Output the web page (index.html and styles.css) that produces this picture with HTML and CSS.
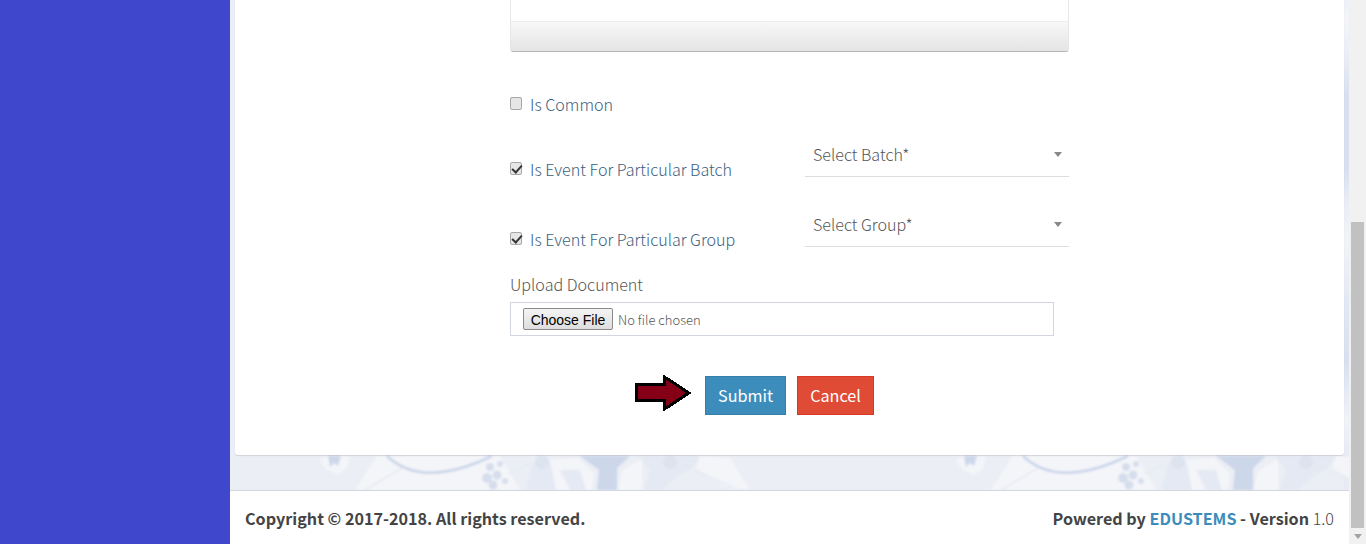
FILE: index.html
```html
<!DOCTYPE html>
<html lang="en">
<head>
<meta charset="utf-8">
<title>Event</title>
<link rel="stylesheet" href="styles.css">
</head>
<body>
<div class="app">
  <aside class="sidebar"></aside>
  <div class="main">
    <div class="content">
      <svg class="pattern" width="1119" height="35" viewBox="0 -1 1119 35" aria-hidden="true">
        <defs>
          <filter id="soft"><feGaussianBlur stdDeviation="1"/></filter>
          <g id="tile">
            <path class="pale" d="M90 4 L98 0 L120 0 L117 12 L108 19 L96 13 Z"/>
            <path class="dark" d="M98 0 L111 0 L108 10 L104 7 L100 11 Z"/>
            <path class="pale" d="M147 0 L125 34 L290 34 L270 0 Z"/>
            <path class="stemthin" d="M135 34 L172 12"/>
            <path class="stem" d="M157 0 C178 20 212 24 262 0"/>
            <circle class="grape" cx="260" cy="11" r="4"/><circle class="grape" cx="267" cy="19" r="4.5"/>
            <circle class="grape" cx="257" cy="22" r="5"/><circle class="grape" cx="270" cy="8" r="3"/>
            <circle class="grape" cx="263" cy="29" r="4.5"/><circle class="grape" cx="275" cy="25" r="3"/>
            <path class="stemthin" d="M278 18 L298 9"/>
            <path class="petal" d="M296 34 L302 8 L312 0 L322 8 L338 34 Z"/>
            <circle class="petal2" cx="312" cy="6" r="7"/>
            <path class="pale" d="M320 4 L348 2 L364 18 L362 34 L326 34 Z"/>
            <path class="petal" d="M330 14 L350 14 L356 34 L340 34 Z"/>
            <path class="dark" d="M350 0 L400 0 L387 12 L387 34 L367 34 L369 14 Z"/>
            <path class="pale" d="M392 15 L412 2 L412 34 L388 34 Z"/>
            <path class="petal" d="M408 0 L470 0 L462 12 L448 20 L432 34 L414 34 L420 14 Z"/>
            <circle class="petal2" cx="440" cy="6" r="7"/>
            <path class="pale" d="M470 0 L500 2 L520 34 L494 30 L466 12 Z"/>
            <path class="stemthin" d="M463 14 L503 31"/>
          </g>
        </defs>
        <g filter="url(#soft)">
          <use href="#tile"/>
          <use href="#tile" x="636"/>
        </g>
      </svg>
      <section class="card">
        <div class="form">
          <div class="editor">
            <div class="editor-body"></div>
            <div class="editor-foot"></div>
          </div>
          <label class="check common"><input type="checkbox"><span>Is Common</span></label>
          <div class="check-row first">
            <label class="check"><input type="checkbox" checked><span>Is Event For Particular Batch</span></label>
            <div class="select"><span>Select Batch*</span><i class="caret"></i></div>
          </div>
          <div class="check-row">
            <label class="check"><input type="checkbox" checked><span>Is Event For Particular Group</span></label>
            <div class="select"><span>Select Group*</span><i class="caret"></i></div>
          </div>
          <div class="upload-label">Upload Document</div>
          <div class="upload"><button class="file-btn" type="button">Choose File</button><span class="file-name">No file chosen</span></div>
          <div class="actions">
            <svg class="arrow" width="60" height="38" viewBox="0 0 60 38" aria-hidden="true">
              <path d="M1.5 10.5 H29.5 V3 L54 19 L29.5 35 V26.5 H1.5 Z" fill="#850017" stroke="#000" stroke-width="3"/>
            </svg>
            <button class="btn submit" type="button">Submit</button>
            <button class="btn cancel" type="button">Cancel</button>
          </div>
        </div>
      </section>
    </div>
    <footer class="footer">
      <strong>Copyright © 2017-2018. All rights reserved.</strong>
      <span><strong>Powered by <span class="brand">EDUSTEMS</span> - Version</strong> <span class="ver">1.0</span></span>
    </footer>
  </div>
  <div class="scrollbar">
    <div class="track"><div class="thumb"></div></div>
    <i class="down"></i>
  </div>
</div>
</body>
</html>
```
FILE: styles.css
```css
* { box-sizing: border-box; }
html, body { margin: 0; height: 544px; overflow: hidden; }
body { font-family: "Noto Sans CJK SC", "Source Sans Pro", "Open Sans", sans-serif; color: #444; background: #fff; }
.app { display: flex; height: 544px; }
.sidebar { width: 230px; flex: none; background: #3f48cc; }
.main { flex: 1; min-width: 0; display: flex; flex-direction: column; }
.content { position: relative; height: 491px; flex: none; border-bottom: 1px solid #d2d6de; padding-left: 5px; padding-right: 5px;
  background: linear-gradient(#edf0f7 0, #f3f5f9 20px, #e8edf5 60px, #d8e0ef 95px, #d8e0ef 170px, #e8edf5 200px, #f2f4f8 240px, #e3e9f3 300px, #d8e0ef 360px, #f0f3f8 420px, #e6ebf4 456px) right top / 5px 100% no-repeat, #ebeef4; }
.pattern { position: absolute; left: 0; bottom: 0; }
.pale { fill: #f4f5f9; }
.grape { fill: #d6deed; }
.petal { fill: #e4e9f3; }
.petal2 { fill: #dde4f0; }
.dark { fill: #cdd7ea; }
.stem { fill: none; stroke: #c9d4ea; stroke-width: 2.5; }
.stemthin { fill: none; stroke: #e6eaf3; stroke-width: 1.5; }
.card { position: relative; height: 455px; background: #fff; border-radius: 0 0 3px 3px; box-shadow: 0 1px 1px rgba(0,0,0,.12); }
.form { width: 559px; margin-left: 275px; }
.editor { height: 52px; border: 1px solid #e6e6e6; border-top: 0; border-bottom: 1px solid #b5b5b5; border-radius: 0 0 3px 3px; }
.editor-body { height: 22px; border-bottom: 1px solid #ededed; }
.editor-foot { height: 29px; background: linear-gradient(#f8f8f8, #e4e4e4); }
.check { display: flex; align-items: center; font-weight: 300; font-size: 16.1px; line-height: 22px; }
.check input { appearance: none; -webkit-appearance: none; position: relative; width: 12px; height: 13px; margin: 0 8px 1px 0; background: #e6e6e6; border: 1px solid #a8a8a8; border-radius: 2px; }
.check input:checked::after { content: ""; position: absolute; left: 3px; top: 0; width: 4px; height: 8px; border: solid #333; border-width: 0 2px 2px 0; transform: rotate(42deg); }
.check span { color: #3b6080; }
.common { margin-top: 41px; height: 22px; }
.check-row { display: flex; align-items: flex-start; height: 70px; }
.check-row.first { margin-top: 18px; }
.check-row .check { width: 295px; margin-top: 25px; }
.select { position: relative; width: 264px; height: 44px; padding: 0 8px; border-bottom: 1px solid #ddd; font-weight: 300; font-size: 16.1px; line-height: 43px; color: #555; }
.caret { position: absolute; right: 7px; top: 19px; width: 0; height: 0; border-left: 4px solid transparent; border-right: 4px solid transparent; border-top: 5px solid #888; }
.upload-label { font-weight: 300; font-size: 16.1px; line-height: 22px; color: #555; }
.upload { width: 544px; height: 34px; margin-top: 7px; border: 1px solid #d2d6de; padding: 0 12px; display: flex; align-items: center; }
.file-btn { width: 90px; height: 22px; padding: 1px 0 0; border: 1px solid #8a8a8a; border-radius: 2px; background: linear-gradient(#f4f4f4, #dedede); font-family: "Liberation Sans", Arial, sans-serif; font-size: 14px; color: #000; }
.file-name { margin-left: 5px; font-size: 13px; font-weight: 300; color: #555; }
.actions { display: flex; align-items: flex-start; margin-top: 40px; margin-left: 125px; }
.arrow { flex: none; margin: -2px 10px 0 0; shape-rendering: crispEdges; }
.btn { height: 39px; border: 1px solid transparent; padding: 0 0 2px; color: #fff; font-family: inherit; font-size: 16.2px; }
.submit { width: 81px; background: #3c8dbc; border-color: #367fa9; }
.cancel { width: 77px; margin-left: 11px; background: #e04b36; border-color: #d73925; }
.footer { flex: 1; display: flex; justify-content: space-between; align-items: center; padding: 0 15px; background: #fff; font-size: 16.15px; color: #444; }
.footer strong { font-weight: 700; }
.brand { color: #3c8dbc; }
.ver { font-weight: 300; }
.scrollbar { width: 17px; flex: none; background: #f1f1f1; display: flex; flex-direction: column; align-items: center; }
.track { flex: 1; width: 100%; padding: 222px 2px 0; }
.thumb { height: 306px; background: #c1c1c1; }
.down { width: 0; height: 0; margin: 6px 0; border-left: 4px solid transparent; border-right: 4px solid transparent; border-top: 5px solid #a3a3a3; }
```
